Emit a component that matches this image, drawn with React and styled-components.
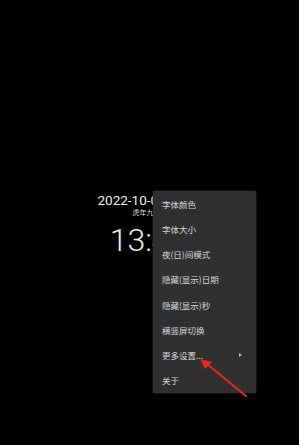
import React from 'react';
import styled, { createGlobalStyle } from 'styled-components';

const Global = createGlobalStyle`
  html, body {
    margin: 0;
    padding: 0;
    background: #000;
  }
  body {
    font-family: Roboto, "Noto Sans CJK SC", sans-serif;
  }
`

const Screen = styled.div`
  position: relative;
  width: 299px;
  height: 445px;
  overflow: hidden;
  background: #000;
`

const Clock = styled.div`
  display: flex;
  flex-direction: column;
  align-items: center;
  padding-top: 191px;
  color: #ececec;
`

const DateLine = styled.div`
  font-size: 13.5px;
  line-height: 18px;
  margin-left: 8px;
`

const Lunar = styled.div`
  font-size: 7px;
  line-height: 9px;
  color: #cfcfcf;
  margin-left: 8px;
`

const Time = styled.div`
  font-size: 32px;
  line-height: 38px;
  font-weight: 300;
  margin-top: 3px;
  margin-right: 2px;
`

const Menu = styled.ul`
  position: absolute;
  left: 153px;
  top: 191px;
  width: 103px;
  margin: 0;
  padding: 0;
  list-style: none;
  background: #303030;
  box-shadow: 0 0 2px rgba(80, 80, 80, 0.6);
`

const Item = styled.li`
  display: flex;
  align-items: center;
  justify-content: space-between;
  height: 25.25px;
  padding: 0 14px 0 9px;
  font-family: "Noto Sans CJK SC", sans-serif;
  font-size: 8.5px;
  color: #d8d8d8;
`

const SubArrow = styled.span`
  width: 0;
  height: 0;
  border-top: 2px solid transparent;
  border-bottom: 2px solid transparent;
  border-left: 3px solid #bdbdbd;
`

const Pointer = styled.svg`
  position: absolute;
  left: 0;
  top: 0;
  pointer-events: none;
`

const items = [
  { label: '字体颜色' },
  { label: '字体大小' },
  { label: '夜(日)间模式' },
  { label: '隐藏(显示)日期' },
  { label: '隐藏(显示)秒' },
  { label: '横竖屏切换' },
  { label: '更多设置...', sub: true },
  { label: '关于' },
]

export default function App() {
  return (
    <Screen>
      <Global />
      <Clock>
        <DateLine>2022-10-06 星期四</DateLine>
        <Lunar>虎年九月十一</Lunar>
        <Time>13:45</Time>
      </Clock>
      <Menu>
        {items.map(item => (
          <Item key={item.label}>
            <span>{item.label}</span>
            {item.sub && <SubArrow />}
          </Item>
        ))}
      </Menu>
      <Pointer width="299" height="445" viewBox="0 0 299 445">
        <line x1="246" y1="396" x2="207" y2="364" stroke="#e8261f" strokeWidth="2.2" strokeLinecap="round" />
        <polygon points="200,359 212,362 205,369" fill="#e8261f" />
      </Pointer>
    </Screen>
  )
}
